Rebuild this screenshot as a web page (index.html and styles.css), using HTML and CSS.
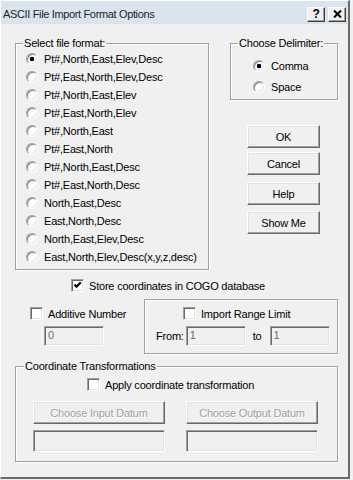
FILE: index.html
```html
<!DOCTYPE html>
<html lang="en">
<head>
    <meta charset="UTF-8">
    <meta name="viewport" content="width=device-width, initial-scale=1.0">
    <title>ASCII File Import Format Options</title>
    <link rel="stylesheet" href="styles.css">
</head>
<body>
    <div class="window">
        <div class="titlebar">
            <span class="title">ASCII File Import Format Options</span>
            <div class="caption-buttons">
                <span class="cap-btn">?</span>
                <span class="cap-btn">
                    <svg width="9" height="8" viewBox="0 0 9 8"><path d="M1 0.5 L8 7.5 M8 0.5 L1 7.5" stroke="#000" stroke-width="2"/></svg>
                </span>
            </div>
        </div>

        <div class="client">
            <div class="top-row">
                <fieldset class="group format-group">
                    <legend>Select file format:</legend>
                    <label class="radio-row"><span class="radio checked"></span>Pt#,North,East,Elev,Desc</label>
                    <label class="radio-row"><span class="radio"></span>Pt#,East,North,Elev,Desc</label>
                    <label class="radio-row"><span class="radio"></span>Pt#,North,East,Elev</label>
                    <label class="radio-row"><span class="radio"></span>Pt#,East,North,Elev</label>
                    <label class="radio-row"><span class="radio"></span>Pt#,North,East</label>
                    <label class="radio-row"><span class="radio"></span>Pt#,East,North</label>
                    <label class="radio-row"><span class="radio"></span>Pt#,North,East,Desc</label>
                    <label class="radio-row"><span class="radio"></span>Pt#,East,North,Desc</label>
                    <label class="radio-row"><span class="radio"></span>North,East,Desc</label>
                    <label class="radio-row"><span class="radio"></span>East,North,Desc</label>
                    <label class="radio-row"><span class="radio"></span>North,East,Elev,Desc</label>
                    <label class="radio-row"><span class="radio"></span>East,North,Elev,Desc(x,y,z,desc)</label>
                </fieldset>

                <div class="side">
                    <fieldset class="group delim-group">
                        <legend>Choose Delimiter:</legend>
                        <label class="radio-row"><span class="radio checked"></span>Comma</label>
                        <label class="radio-row"><span class="radio"></span>Space</label>
                    </fieldset>
                    <div class="button-stack">
                        <button class="btn">OK</button>
                        <button class="btn">Cancel</button>
                        <button class="btn">Help</button>
                        <button class="btn">Show Me</button>
                    </div>
                </div>
            </div>

            <label class="check-row store-row">
                <span class="check"><svg width="9" height="9" viewBox="0 0 9 9"><path d="M1.5 3.5 L3.5 5.8 L7.8 1.2" fill="none" stroke="#000" stroke-width="2"/></svg></span>
                Store coordinates in COGO database
            </label>

            <div class="mid-row">
                <div class="additive">
                    <label class="check-row"><span class="check"></span>Additive Number</label>
                    <div class="field small">0</div>
                </div>
                <div class="range-box">
                    <label class="check-row range-check"><span class="check"></span>Import Range Limit</label>
                    <div class="range-fields">
                        <span>From:</span>
                        <div class="field small">1</div>
                        <span class="to-label">to</span>
                        <div class="field small">1</div>
                    </div>
                </div>
            </div>

            <fieldset class="group transform-group">
                <legend>Coordinate Transformations</legend>
                <label class="check-row apply-row"><span class="check"></span>Apply coordinate transformation</label>
                <div class="datum-grid">
                    <button class="btn disabled">Choose Input Datum</button>
                    <button class="btn disabled">Choose Output Datum</button>
                    <div class="field wide"></div>
                    <div class="field wide"></div>
                </div>
            </fieldset>
        </div>
    </div>
</body>
</html>
```

FILE: styles.css
```css
body {
    margin: 0;
    background: #f0f0f0;
    font-family: "Liberation Sans", Arial, sans-serif;
    font-size: 11px;
    letter-spacing: -0.2px;
    color: #000;
}
.window {
    width: 347px;
    height: 476px;
    border-top: 1px solid #fff;
    border-left: 1px solid #fff;
    border-right: 2px solid #6b6b6b;
    border-bottom: 2px solid #6b6b6b;
    background: #f0f0f0;
}
.titlebar {
    box-sizing: border-box;
    height: 23px;
    padding: 3px 2px 0 2px;
    background: #dae4ef;
    display: flex;
    align-items: center;
    justify-content: space-between;
}
.title {
    font-size: 11px;
    letter-spacing: -0.35px;
    color: #1e1e1e;
}
.caption-buttons {
    display: flex;
    gap: 3px;
}
.cap-btn {
    box-sizing: border-box;
    width: 18px;
    height: 15px;
    display: flex;
    align-items: center;
    justify-content: center;
    background: #f0f0f0;
    border: 1px solid;
    border-color: #fff #404040 #404040 #fff;
    box-shadow: inset -1px -1px #a0a0a0;
    font-weight: bold;
    font-size: 12px;
    line-height: 1;
}
.client {
    padding: 13px 0 0 14px;
}
.top-row {
    display: flex;
    align-items: flex-start;
    gap: 21px;
}
.group {
    box-sizing: border-box;
    margin: 0;
    min-width: 0;
    border: 1px solid #a0a0a0;
    box-shadow: 1px 1px 0 #fff, inset 1px 1px 0 #fff;
}
.group legend {
    padding: 0 1px;
    line-height: 13px;
    background: #f0f0f0;
}
.format-group {
    width: 194px;
    padding: 0 0 3px 10px;
}
.format-group legend {
    margin-left: -3px;
}
.radio-row {
    display: flex;
    align-items: center;
    gap: 6px;
    height: 18px;
    white-space: nowrap;
}
.radio {
    box-sizing: border-box;
    width: 12px;
    height: 12px;
    border-radius: 50%;
    border: 1px solid;
    border-color: #a0a0a0 #fff #fff #a0a0a0;
    box-shadow: inset 1px 1px #8a8a8a, inset -1px -1px #e3e3e3;
    background: #fff;
    flex: none;
}
.radio.checked {
    background: radial-gradient(circle, #000 2px, #fff 2.6px);
}
.side {
    width: 108px;
}
.delim-group {
    width: 108px;
    padding: 5px 0 2px 22px;
}
.delim-group legend {
    margin-left: -15px;
}
.delim-group .radio-row {
    height: 21px;
}
.button-stack {
    display: flex;
    flex-direction: column;
    gap: 6px;
    margin: 25px 0 0 17px;
}
.button-stack .btn:nth-child(2) {
    margin-top: -2px;
}
.button-stack .btn:nth-child(3) {
    margin-top: 1px;
}
.btn {
    box-sizing: border-box;
    width: 73px;
    height: 23px;
    padding: 0;
    font-family: inherit;
    font-size: 11px;
    letter-spacing: inherit;
    color: #000;
    background: #f0f0f0;
    border: 1px solid;
    border-color: #fff #696969 #696969 #fff;
    box-shadow: inset -1px -1px #a0a0a0, inset 1px 1px #e3e3e3;
}
.btn.disabled {
    color: #a0a0a0;
    text-shadow: 1px 1px #fff;
}
.check-row {
    display: flex;
    align-items: center;
    gap: 5px;
    height: 13px;
    white-space: nowrap;
}
.check {
    box-sizing: border-box;
    width: 13px;
    height: 13px;
    flex: none;
    display: flex;
    align-items: center;
    justify-content: center;
    background: #fff;
    border: 1px solid;
    border-color: #a0a0a0 #fff #fff #a0a0a0;
    box-shadow: inset 1px 1px #696969, inset -1px -1px #e3e3e3;
}
.store-row {
    margin: 9px 0 0 56px;
}
.mid-row {
    display: flex;
    margin-top: 7px;
}
.additive {
    width: 114px;
    padding: 8px 0 0 15px;
}
.field {
    box-sizing: border-box;
    height: 20px;
    padding: 2px 0 0 3px;
    color: #6d6d6d;
    background: #f0f0f0;
    border: 1px solid;
    border-color: #a0a0a0 #fff #fff #a0a0a0;
    box-shadow: inset 1px 1px #696969, inset -1px -1px #e3e3e3;
}
.field.small {
    width: 60px;
}
.additive .field {
    margin: 6px 0 0 14px;
}
.range-box {
    box-sizing: border-box;
    width: 194px;
    padding: 7px 0 7px 11px;
    border: 1px solid #a0a0a0;
    box-shadow: 1px 1px 0 #fff, inset 1px 1px 0 #fff;
}
.range-check {
    margin-left: 27px;
}
.range-fields {
    display: flex;
    align-items: center;
    margin-top: 6px;
}
.range-fields .field {
    margin-left: 2px;
}
.to-label {
    margin-left: 7px;
}
.range-fields .to-label + .field {
    margin-left: 8px;
}
.transform-group {
    width: 323px;
    margin-top: 6px;
    padding: 5px 0 9px 17px;
}
.transform-group legend {
    margin-left: -9px;
}
.apply-row {
    margin-left: 54px;
}
.datum-grid {
    display: grid;
    grid-template-columns: 132px 132px;
    column-gap: 21px;
    row-gap: 6px;
    margin-top: 10px;
}
.datum-grid .btn {
    width: 132px;
}
.field.wide {
    height: 22px;
}
```
